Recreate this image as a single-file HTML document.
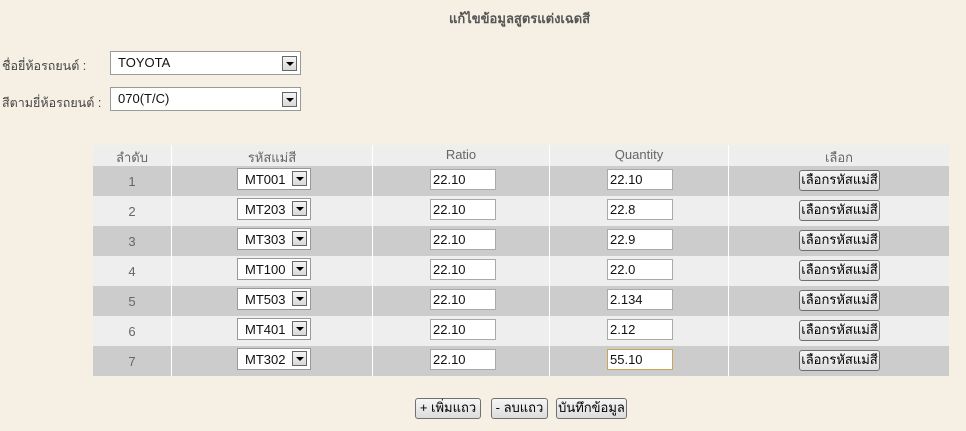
<!DOCTYPE html>
<html><head><meta charset="utf-8"><style>
body{margin:0;width:966px;height:431px;background:#f5f0e3;font-family:"Liberation Sans","Noto Sans CJK SC",sans-serif;font-size:13px;color:#333;position:relative;overflow:hidden}
.a{position:absolute}
.title{left:449px;top:8px;font-weight:bold;color:#555;font-size:13px}
.lbl{left:2px;font-size:12.5px;color:#444}
.sel{background:#fff;border:1px solid #999;box-sizing:border-box;font-size:13px;color:#111}
.sel span.t{position:absolute;left:7px;top:3px}
.arr{position:absolute;right:3px;top:2px;width:15px;height:15px;border:1px solid #666;background:linear-gradient(#f4f4f4,#d8d8d8);box-sizing:border-box}
.arr:after{content:"";position:absolute;left:3px;top:5px;border-left:4px solid transparent;border-right:4px solid transparent;border-top:4px solid #000}
.tbl{left:93px;top:145px;width:856px;height:231px;background:#ccc;border-radius:2px}
.row{position:absolute;left:0;width:856px;height:30px}
.c{position:absolute;top:0;height:100%;border-right:1px solid #fff;box-sizing:border-box;text-align:center;color:#666;font-size:13px}
.inp{background:#fff;border:1px solid #aaa;box-sizing:border-box;height:21px;font-size:13px;color:#111;padding:2px 0 0 2px}
.btn{border:1px solid #707070;border-radius:3px;background:linear-gradient(#f6f6f6,#dcdcdc);box-sizing:border-box;font-size:13px;color:#000;text-align:center;height:21px;line-height:18px}
</style></head><body>
<div class="a title">แก้ไขข้อมูลสูตรแต่งเฉดสี</div>
<div class="a lbl" style="top:56px">ชื่อยี่ห้อรถยนต์ :</div>
<div class="a lbl" style="top:93px">สีตามยี่ห้อรถยนต์ :</div>
<div class="a sel" style="left:110px;top:51px;width:191px;height:24px"><span class="t">TOYOTA</span><div class="arr" style="top:4px"></div></div>
<div class="a sel" style="left:110px;top:87px;width:191px;height:24px"><span class="t">070(T/C)</span><div class="arr" style="top:4px"></div></div>

<div class="a tbl">
<div class="row" style="top:0;height:21px;background:#eee">
 <div class="c" style="left:0;width:79px;padding-top:2px">ลำดับ</div>
 <div class="c" style="left:79px;width:201px;padding-top:2px">รหัสแม่สี</div>
 <div class="c" style="left:280px;width:177px;padding-top:2px">Ratio</div>
 <div class="c" style="left:457px;width:179px;padding-top:2px">Quantity</div>
 <div class="c" style="left:636px;width:220px;padding-top:2px;border:0">เลือก</div>
</div>
</div>
<div id="rows"></div>
<script>
var d=[["1","MT001","22.10"],["2","MT203","22.8"],["3","MT303","22.9"],["4","MT100","22.0"],["5","MT503","2.134"],["6","MT401","2.12"],["7","MT302","55.10"]];
var h="";
d.forEach(function(r,i){var y=166+i*30;var bg=i%2?"#eee":"#ccc";
h+='<div class="a" style="left:93px;top:'+y+'px;width:856px;height:30px;background:'+bg+'">'+
'<div class="c" style="left:0;width:79px;padding-top:8px">'+r[0]+'</div>'+
'<div class="c" style="left:79px;width:201px"></div><div class="c" style="left:280px;width:177px"></div><div class="c" style="left:457px;width:179px"></div></div>'+
'<div class="a sel" style="left:237px;top:'+(y+2)+'px;width:74px;height:22px"><span class="t">'+r[1]+'</span><div class="arr"></div></div>'+
'<div class="a inp" style="left:430px;top:'+(y+3)+'px;width:66px">22.10</div>'+
'<div class="a inp" style="left:607px;top:'+(y+3)+'px;width:66px;'+(i==6?'border-color:#c9a45c':'')+'">'+r[2]+'</div>'+
'<div class="a btn" style="left:799px;top:'+(y+4)+'px;width:81px">เลือกรหัสแม่สี</div>';});
document.getElementById("rows").innerHTML=h;
</script>
<div class="a btn" style="left:415px;top:398px;width:66px">+ เพิ่มแถว</div>
<div class="a btn" style="left:491px;top:398px;width:57px">- ลบแถว</div>
<div class="a btn" style="left:556px;top:398px;width:71px">บันทึกข้อมูล</div>
</body></html>
